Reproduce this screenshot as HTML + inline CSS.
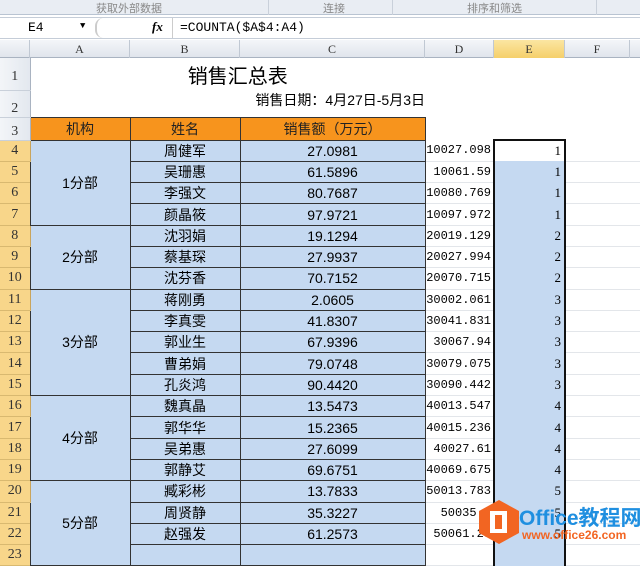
<!DOCTYPE html><html><head><meta charset="utf-8"><style>
*{margin:0;padding:0;box-sizing:border-box}
body{width:640px;height:548px;overflow:hidden;background:#fff;font-family:"Liberation Sans","Noto Sans CJK SC",sans-serif;position:relative}
.rib{position:absolute;left:0;top:0;width:640px;height:15px;background:#e9edf3;border-bottom:1px solid #b9c4d2;font-size:11px;color:#888}
.rib span{position:absolute;top:0}
.fb{position:absolute;left:0;top:17px;width:640px;height:22px;border-top:1px solid #c5cdd8;border-bottom:1px solid #c5cdd8;background:#fff;font-family:"Liberation Mono","Noto Sans CJK SC",monospace;font-size:13px}
.hdr{position:absolute;top:40px;left:0;height:18px;width:640px;background:linear-gradient(#f4f6f9,#e0e5ec);border-bottom:1px solid #a9b3c1}
.hdr div{position:absolute;top:0;height:18px;text-align:center;font-size:12px;color:#333;border-right:1px solid #c0c8d3;line-height:18px;font-family:"Liberation Serif",serif}
table{position:absolute;left:0;top:58px;border-collapse:collapse;table-layout:fixed}
td{padding:0;font-size:14px;white-space:nowrap;overflow:visible}
td.rn{background:linear-gradient(90deg,#f3f5f8,#e3e8ef);color:#333;text-align:center;font-family:"Liberation Serif",serif;font-size:14px;vertical-align:bottom;border-bottom:1px solid #c9d0da;border-right:1px solid #a9b3c1}
td.rs{background:#f8d68a;color:#333;text-align:center;font-family:"Liberation Serif",serif;font-size:14px;border-bottom:1px solid #d9b970;border-right:1px solid #c9a45c}
tr.r td{height:21.3px}
.bl{background:#c5d9f1;border:1px solid #333;text-align:center}
.or{background:#f7941d;border:1px solid #333;text-align:center;color:#222}
.d{font-family:"Liberation Mono",monospace;font-size:12px;text-align:right;padding-right:2px;border-bottom:1px solid #e3e6ea}
.e{background:#c5d9f1;text-align:right;font-family:"Liberation Serif",serif;font-size:13px;padding-right:3px;border-left:2px solid #111;border-right:2px solid #111}
.f{border-bottom:1px solid #e3e6ea}
</style></head><body>
<div class="rib"><span style="left:96px">获取外部数据</span><span style="left:323px">连接</span><span style="left:467px">排序和筛选</span><span style="left:268px;top:0;height:15px;border-left:1px solid #c9d0da"></span><span style="left:392px;height:15px;border-left:1px solid #c9d0da"></span><span style="left:596px;height:15px;border-left:1px solid #c9d0da"></span></div>
<div class="fb"><span style="position:absolute;left:28px;top:2px">E4</span><span style="position:absolute;left:80px;top:3px;font-size:9px">▼</span><span style="position:absolute;left:95px;top:0;width:50px;height:20px;border-left:2px solid #ccc;border-radius:8px"></span><span style="position:absolute;left:152px;top:1px;font-style:italic;font-family:'Liberation Serif',serif;font-weight:bold">fx</span><span style="position:absolute;left:172px;top:0;height:20px;border-left:1px solid #ccc"></span><span style="position:absolute;left:180px;top:2px">=COUNTA($A$4:A4)</span></div>
<div class="hdr"><div style="left:0;width:30px"></div><div style="left:30px;width:100px">A</div><div style="left:130px;width:110px">B</div><div style="left:240px;width:185px">C</div><div style="left:425px;width:69px">D</div><div style="left:494px;width:71px;background:linear-gradient(#fbe6a2,#f5cf6a)">E</div><div style="left:565px;width:65px">F</div></div>
<table>
<colgroup><col style="width:30px"><col style="width:100px"><col style="width:110px"><col style="width:185px"><col style="width:69px"><col style="width:71px"><col style="width:75px"></colgroup>
<tr><td class="rn" style="height:32px;vertical-align:middle;padding-top:6px">1</td><td colspan="3" style="text-align:center;font-size:20px;padding-left:20px;vertical-align:top;padding-top:2px">销售汇总表</td><td></td><td></td><td></td></tr>
<tr><td class="rn" style="height:27px">2</td><td colspan="3" style="text-align:right;font-size:14px;vertical-align:top;padding-top:0px">销售日期：4月27日-5月3日</td><td></td><td></td><td></td></tr>
<tr><td class="rn" style="height:23px">3</td><td class="or">机构</td><td class="or">姓名</td><td class="or">销售额（万元）</td><td></td><td style="border-bottom:2px solid #111"></td><td></td></tr>
<tr class="r"><td class="rs">4</td><td class="bl" rowspan="4">1分部</td><td class="bl">周健军</td><td class="bl">27.0981</td><td class="d">10027.098</td><td class="e" style="background:#fff">1</td><td class="f"></td></tr>
<tr class="r"><td class="rs">5</td><td class="bl">吴珊惠</td><td class="bl">61.5896</td><td class="d">10061.59</td><td class="e">1</td><td class="f"></td></tr>
<tr class="r"><td class="rs">6</td><td class="bl">李强文</td><td class="bl">80.7687</td><td class="d">10080.769</td><td class="e">1</td><td class="f"></td></tr>
<tr class="r"><td class="rs">7</td><td class="bl">颜晶筱</td><td class="bl">97.9721</td><td class="d">10097.972</td><td class="e">1</td><td class="f"></td></tr>
<tr class="r"><td class="rs">8</td><td class="bl" rowspan="3">2分部</td><td class="bl">沈羽娟</td><td class="bl">19.1294</td><td class="d">20019.129</td><td class="e">2</td><td class="f"></td></tr>
<tr class="r"><td class="rs">9</td><td class="bl">蔡基琛</td><td class="bl">27.9937</td><td class="d">20027.994</td><td class="e">2</td><td class="f"></td></tr>
<tr class="r"><td class="rs">10</td><td class="bl">沈芬香</td><td class="bl">70.7152</td><td class="d">20070.715</td><td class="e">2</td><td class="f"></td></tr>
<tr class="r"><td class="rs">11</td><td class="bl" rowspan="5">3分部</td><td class="bl">蒋刚勇</td><td class="bl">2.0605</td><td class="d">30002.061</td><td class="e">3</td><td class="f"></td></tr>
<tr class="r"><td class="rs">12</td><td class="bl">李真雯</td><td class="bl">41.8307</td><td class="d">30041.831</td><td class="e">3</td><td class="f"></td></tr>
<tr class="r"><td class="rs">13</td><td class="bl">郭业生</td><td class="bl">67.9396</td><td class="d">30067.94</td><td class="e">3</td><td class="f"></td></tr>
<tr class="r"><td class="rs">14</td><td class="bl">曹弟娟</td><td class="bl">79.0748</td><td class="d">30079.075</td><td class="e">3</td><td class="f"></td></tr>
<tr class="r"><td class="rs">15</td><td class="bl">孔炎鸿</td><td class="bl">90.4420</td><td class="d">30090.442</td><td class="e">3</td><td class="f"></td></tr>
<tr class="r"><td class="rs">16</td><td class="bl" rowspan="4">4分部</td><td class="bl">魏真晶</td><td class="bl">13.5473</td><td class="d">40013.547</td><td class="e">4</td><td class="f"></td></tr>
<tr class="r"><td class="rs">17</td><td class="bl">郭华华</td><td class="bl">15.2365</td><td class="d">40015.236</td><td class="e">4</td><td class="f"></td></tr>
<tr class="r"><td class="rs">18</td><td class="bl">吴弟惠</td><td class="bl">27.6099</td><td class="d">40027.61</td><td class="e">4</td><td class="f"></td></tr>
<tr class="r"><td class="rs">19</td><td class="bl">郭静艾</td><td class="bl">69.6751</td><td class="d">40069.675</td><td class="e">4</td><td class="f"></td></tr>
<tr class="r"><td class="rs">20</td><td class="bl" rowspan="4">5分部</td><td class="bl">臧彩彬</td><td class="bl">13.7833</td><td class="d">50013.783</td><td class="e">5</td><td class="f"></td></tr>
<tr class="r"><td class="rs">21</td><td class="bl">周贤静</td><td class="bl">35.3227</td><td class="d">50035.3</td><td class="e">5</td><td class="f"></td></tr>
<tr class="r"><td class="rs">22</td><td class="bl">赵强发</td><td class="bl">61.2573</td><td class="d">50061.25</td><td class="e">5</td><td class="f"></td></tr>
<tr class="r"><td class="rs">23</td><td class="bl"></td><td class="bl"></td><td class="d"></td><td class="e"></td><td class="f"></td></tr>
</table>
<svg style="position:absolute;left:476px;top:499px" width="46" height="46" viewBox="0 0 46 46"><polygon points="23,1 43,12 43,34 23,45 3,34 3,12" fill="#f26522"/><rect x="14" y="12" width="17" height="22" fill="#fff"/><rect x="19" y="16" width="7" height="14" fill="#f26522"/></svg>
<div style="position:absolute;left:519px;top:502px;font-size:21px;font-weight:bold;color:#1f8fe0;white-space:nowrap;font-family:'Liberation Sans','Noto Sans CJK SC',sans-serif">Office教程网</div>
<div style="position:absolute;left:522px;top:528px;font-size:12px;color:#f26522;font-weight:bold;white-space:nowrap">www.office26.com</div>
</body></html>
